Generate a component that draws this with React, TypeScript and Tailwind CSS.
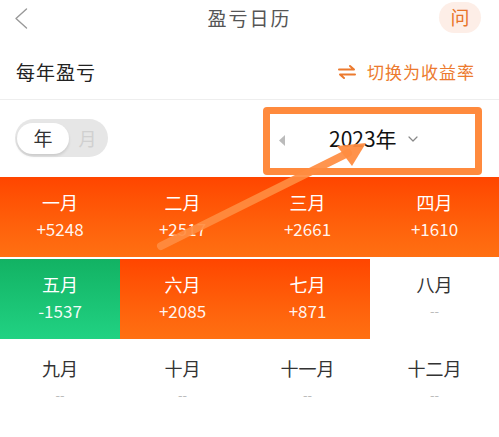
import { ChevronDown } from "lucide-react"

const font = { fontFamily: '"Noto Sans CJK SC", "Noto Sans", sans-serif' }

type Cell = { label: string; value: string; tone: "up" | "down" | "none" }

const rows: Cell[][] = [
  [
    { label: "一月", value: "+5248", tone: "up" },
    { label: "二月", value: "+2517", tone: "up" },
    { label: "三月", value: "+2661", tone: "up" },
    { label: "四月", value: "+1610", tone: "up" },
  ],
  [
    { label: "五月", value: "-1537", tone: "down" },
    { label: "六月", value: "+2085", tone: "up" },
    { label: "七月", value: "+871", tone: "up" },
    { label: "八月", value: "--", tone: "none" },
  ],
  [
    { label: "九月", value: "--", tone: "none" },
    { label: "十月", value: "--", tone: "none" },
    { label: "十一月", value: "--", tone: "none" },
    { label: "十二月", value: "--", tone: "none" },
  ],
]

function MonthCell({ cell }: { cell: Cell }) {
  const empty = cell.tone === "none"
  return (
    <div className="flex flex-col items-center pt-[13px]">
      <div className={`text-[18px] leading-[24px] ${empty ? "text-[#333]" : "text-white"}`}>{cell.label}</div>
      {empty ? (
        <div className="mt-[3px] text-[13px] leading-[24px] text-[#bbb]">--</div>
      ) : (
        <div className="mt-[3px] text-[17px] leading-[24px] text-white/95">{cell.value}</div>
      )}
    </div>
  )
}

export default function App() {
  return (
    <div className="relative w-[499px] h-[437px] overflow-hidden bg-white" style={font}>
      {/* header */}
      <div className="relative flex h-[36px] items-center justify-center">
        <svg className="absolute left-[14px] top-[8px]" width="14" height="21" viewBox="0 0 14 21" fill="none">
          <path d="M12.5 1L2 10.5L12.5 20" stroke="#999" strokeWidth="1.4" strokeLinecap="round" strokeLinejoin="round" />
        </svg>
        <span className="text-[19px] text-[#555] tracking-[2px]">盈亏日历</span>
        <div className="absolute right-[18px] top-[2px] flex h-[31px] w-[42px] items-center justify-center rounded-full bg-[#fdeee7] text-[19px] text-[#e8742a]">
          问
        </div>
      </div>

      {/* title row */}
      <div className="flex h-[64px] items-end justify-between border-b border-[#eee] pl-[16px] pr-[24px] pb-[14px]">
        <span className="text-[19px] leading-[26px] text-[#222] tracking-[1px]">每年盈亏</span>
        <span className="flex items-center gap-[10px] text-[17px] leading-[26px] text-[#ec7a2e] tracking-[1px]">
          <svg width="20" height="16" viewBox="0 0 20 16" fill="none" stroke="#ec7a2e" strokeWidth="2" strokeLinecap="round" strokeLinejoin="round">
            <path d="M2 5.5h15l-4-3.5" />
            <path d="M18 10.5H3l4 3.5" />
          </svg>
          切换为收益率
        </span>
      </div>

      {/* toggle + year */}
      <div className="flex h-[77px] items-start justify-between pl-[15px] pr-[17px]">
        <div className="mt-[19px] flex h-[38px] w-[93px] items-center rounded-full bg-[#e6e6e6] p-[2px]">
          <div className="flex h-[31px] w-[52px] items-center justify-center rounded-full bg-white text-[19px] text-[#333] shadow-[0_2px_3px_rgba(0,0,0,0.12)]">
            年
          </div>
          <div className="flex-1 text-center text-[18px] text-[#d0d0d0]">月</div>
        </div>
        <div className="mt-[7px] h-[68px] w-[219px] rounded-[4px] border-[7px] border-[#ff8a3d] bg-white">
          <div className="flex h-full items-center pl-[9px] pb-[5px]">
            <svg width="6" height="11" viewBox="0 0 6 11" className="mt-[3px]">
              <path d="M6 0L0 5.5L6 11z" fill="#bbb" />
            </svg>
            <span className="ml-[44px] text-[21px] leading-none text-[#111]">2023年</span>
            <ChevronDown className="ml-[8px] h-[16px] w-[16px] text-[#888]" strokeWidth={1.8} />
          </div>
        </div>
      </div>

      {/* month grid */}
      <div className="flex flex-col gap-[2px]">
        <div className="grid grid-cols-[120px_125px_125px_1fr] bg-gradient-to-b from-[#ff4500] to-[#ff7012]">
          {rows[0].map((c) => (
            <div key={c.label} className="h-[80px]">
              <MonthCell cell={c} />
            </div>
          ))}
        </div>
        <div className="grid grid-cols-[120px_250px_1fr]">
          <div className="h-[80px] bg-gradient-to-b from-[#12b263] to-[#21d283]">
            <MonthCell cell={rows[1][0]} />
          </div>
          <div className="grid h-[80px] grid-cols-2 bg-gradient-to-b from-[#ff4500] to-[#ff7012]">
            <MonthCell cell={rows[1][1]} />
            <MonthCell cell={rows[1][2]} />
          </div>
          <div className="h-[80px]">
            <MonthCell cell={rows[1][3]} />
          </div>
        </div>
        <div className="grid grid-cols-[120px_125px_125px_1fr]">
          {rows[2].map((c) => (
            <div key={c.label} className="h-[80px] pt-[2px]">
              <MonthCell cell={c} />
            </div>
          ))}
        </div>
      </div>

      {/* annotation arrow */}
      <svg className="pointer-events-none absolute left-0 top-0" width="499" height="437">
        <line x1="161" y1="246" x2="348" y2="153" stroke="#ff8c40" strokeOpacity="0.92" strokeWidth="8" strokeLinecap="round" />
        <path d="M366 143L337 146L352 166Z" fill="#ff8c40" fillOpacity="0.95" />
      </svg>
    </div>
  )
}
